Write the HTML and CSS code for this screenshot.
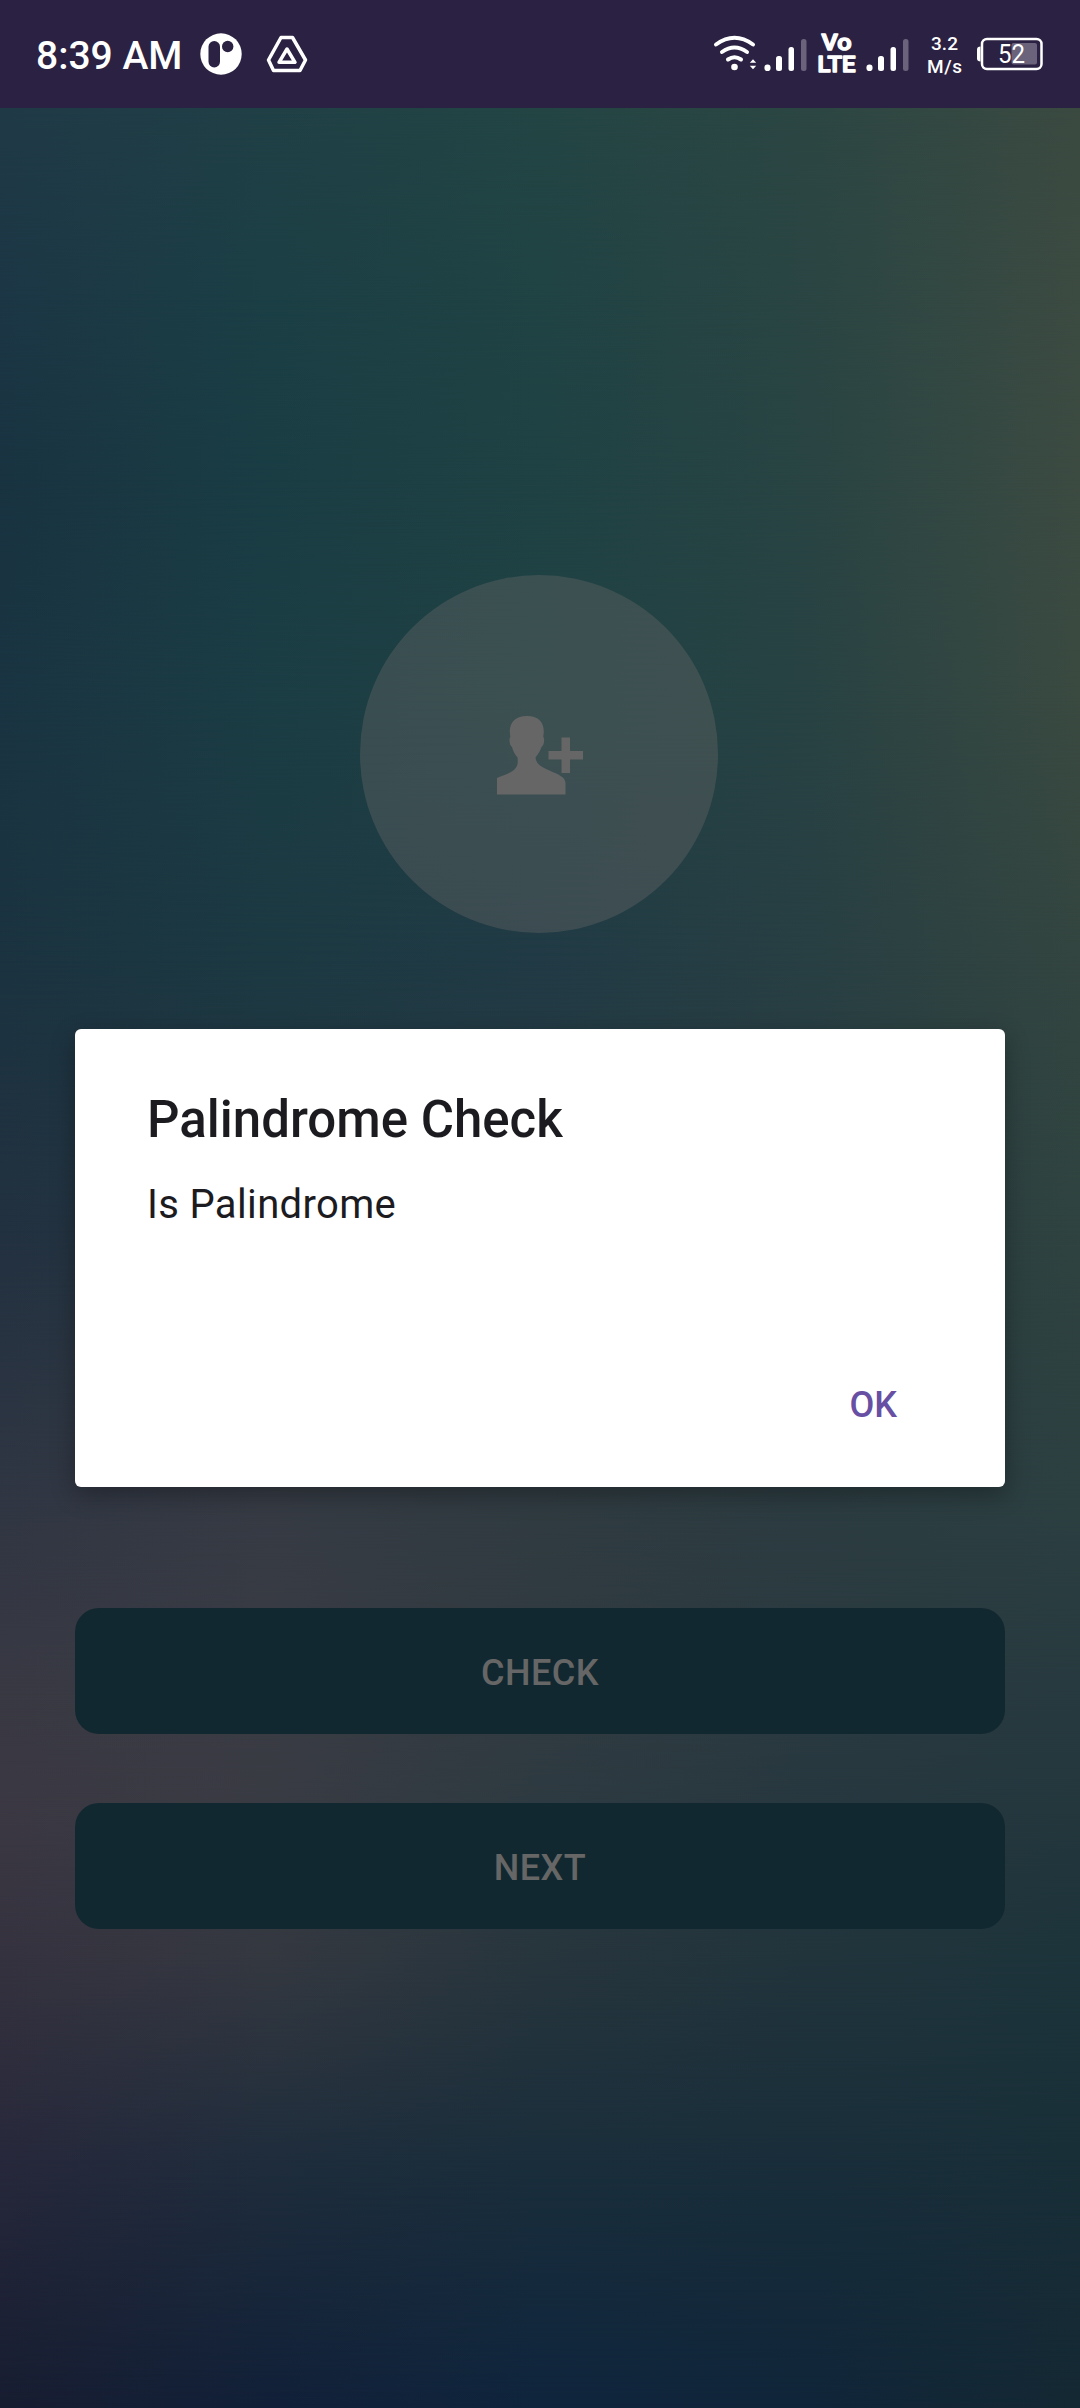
FILE: index.html
```html
<!DOCTYPE html>
<html lang="en">
<head>
<meta charset="utf-8">
<title>Palindrome Check</title>
<link rel="stylesheet" href="styles.css">
</head>
<body>
<div class="screen">
  <div class="backdrop" aria-hidden="true">
    <i class="band b0"></i><i class="band b1"></i><i class="band b2"></i><i class="band b3"></i>
    <i class="band b4"></i><i class="band b5"></i><i class="band b6"></i><i class="band b7"></i>
    <i class="band b8"></i><i class="band b9"></i><i class="band b10"></i><i class="band b11"></i>
  </div>
  <div class="content">
    <header class="status">
      <span class="clock">8:39 AM</span>
      <svg class="notifications" width="110" height="44" viewBox="198 32 110 44">
        <circle cx="221" cy="54" r="20.7" fill="#fff"/>
        <rect x="208.5" y="41" width="11.5" height="26.500" rx="5.700" fill="#2b2142"/>
        <circle cx="227.700" cy="46.500" r="5.700" fill="#2b2142"/>
        <g fill="none" stroke="#fff" stroke-width="3.500" stroke-linejoin="round">
          <path d="M281 37.500h11.500L305.500 60l-5.500 10.500H273.500L268.500 60z"/>
          <path d="M287 49l8 13.300h-16z"/>
        </g>
      </svg>
      <svg class="system" width="340" height="60" viewBox="710 25 340 60">
        <g fill="none" stroke="#fff" stroke-width="4" stroke-linecap="round">
          <path d="M716 44.500q18.500-13.500 37 0"/>
          <path d="M722 52q12.500-9 25 0"/>
          <path d="M728 59.500q6.500-4.500 13 0"/>
        </g>
        <circle cx="734.500" cy="67" r="3.300" fill="#fff"/>
        <path d="M753 59.300l3.200 3.500h-6.400zM753 69.300l3.200-3.500h-6.400z" fill="#fff"/>
        <g fill="#fff">
          <rect x="764.500" y="64.500" width="6" height="6.500" rx="2.800"/>
          <rect x="776" y="56" width="6" height="15" rx="2.500"/>
          <rect x="788.500" y="47" width="5.500" height="24" rx="2.500"/>
          <rect x="866.500" y="64.500" width="6" height="6.500" rx="2.800"/>
          <rect x="878" y="56" width="6" height="15" rx="2.500"/>
          <rect x="890.500" y="47" width="5.500" height="24" rx="2.500"/>
        </g>
        <g fill="#6b637b">
          <rect x="801" y="39" width="5.500" height="32" rx="2.500"/>
          <rect x="903" y="39" width="5.500" height="32" rx="2.500"/>
          <rect x="1011.500" y="43" width="25.500" height="21.500" rx="2"/>
        </g>
        <g class="volte">
          <text x="821.500" y="50" textLength="30" lengthAdjust="spacingAndGlyphs">Vo</text>
          <text x="817.500" y="72" textLength="38" lengthAdjust="spacingAndGlyphs">LTE</text>
        </g>
        <g class="rate">
          <text x="944.500" y="50" text-anchor="middle" textLength="27">3.2</text>
          <text x="944.500" y="73" text-anchor="middle" textLength="35">M/s</text>
        </g>
        <rect x="982" y="39" width="59.500" height="30" rx="5" fill="none" stroke="#fff" stroke-width="2.500"/>
        <path d="M980.500 46.500q-3.500 0-3.500 3v9q0 3 3.500 3z" fill="#fff"/>
        <text class="charge" x="1011.500" y="63" text-anchor="middle" textLength="27" lengthAdjust="spacingAndGlyphs">52</text>
      </svg>
    </header>
    <div class="avatar">
      <svg width="88" height="80" viewBox="0 0 88 80">
        <path d="M30 0C19 0 12.500 6 12.800 16l.5 5C12 22 12.200 29 15 31c1 4 3 8 5.500 10.500 1 8-1 11-6.500 14.500-5 3-10 4-14 6v16.500h68.500V67c0-6-8-9-15-12-8-3.500-14-6-15-13.500C41.500 38 43.500 34 44.500 31c3-2 3.200-9 1.800-10l.5-5C47 6 41 0 30 0z"/>
        <path d="M64.500 21.500h8.500v13.500h13v8.500H73V57h-8.500V43.500H51.500V35h13z"/>
      </svg>
    </div>
    <section class="dialog" role="dialog">
      <h1>Palindrome Check</h1>
      <p>Is Palindrome</p>
      <button class="ok">OK</button>
    </section>
    <div class="actions">
      <button class="action">CHECK</button>
      <button class="action">NEXT</button>
    </div>
  </div>
</div>
</body>
</html>
```
FILE: styles.css
```css
* { box-sizing: border-box; }
body { margin: 0; font-family: Roboto, "Liberation Sans", sans-serif; }
button { border: 0; padding: 0; font: inherit; }

.screen { display: grid; width: 1080px; height: 2408px; overflow: hidden; }
.backdrop, .content { grid-area: 1 / 1; min-width: 0; }
.backdrop { display: grid; }

/* Each band fades in between --from and --to over the bands before it. */
.band {
  grid-area: 1 / 1;
  background: linear-gradient(90deg, var(--c1), var(--c2) 25%, var(--c3) 50%, var(--c4) 75%, var(--c5));
  -webkit-mask-image: linear-gradient(transparent var(--from), #000 var(--to));
  mask-image: linear-gradient(transparent var(--from), #000 var(--to));
}
.b0 { --from: -1px; --to: 0px; --c1: #203a47; --c2: #204046; --c3: #234544; --c4: #2c4643; --c5: #3b4a41; }
.b1 { --from: 108px; --to: 300px; --c1: #1c3645; --c2: #1b3f45; --c3: #204344; --c4: #2a4543; --c5: #3c4b42; }
.b2 { --from: 300px; --to: 480px; --c1: #193341; --c2: #1a3d44; --c3: #1f4244; --c4: #294443; --c5: #3c4b42; }
.b3 { --from: 480px; --to: 700px; --c1: #1a3442; --c2: #1b3d44; --c3: #204244; --c4: #284243; --c5: #3a4a41; }
.b4 { --from: 700px; --to: 960px; --c1: #1b3340; --c2: #1c3942; --c3: #213a45; --c4: #283f43; --c5: #334540; }
.b5 { --from: 960px; --to: 1230px; --c1: #223140; --c2: #263642; --c3: #283b42; --c4: #293d42; --c5: #2f4340; }
.b6 { --from: 1230px; --to: 1500px; --c1: #303643; --c2: #363b44; --c3: #303b41; --c4: #2c3c41; --c5: #2c3f41; }
.b7 { --from: 1500px; --to: 1700px; --c1: #393943; --c2: #3a3c44; --c3: #313b41; --c4: #2a3a40; --c5: #273a3f; }
.b8 { --from: 1700px; --to: 1820px; --c1: #3b3843; --c2: #393b43; --c3: #2d3a41; --c4: #27373f; --c5: #23373d; }
.b9 { --from: 1820px; --to: 1960px; --c1: #35323f; --c2: #343840; --c3: #27353d; --c4: #21343c; --c5: #1d343b; }
.b10 { --from: 1960px; --to: 2160px; --c1: #27283b; --c2: #1f2d3c; --c3: #1a2e3b; --c4: #192e3a; --c5: #192f38; }
.b11 { --from: 2160px; --to: 2408px; --c1: #171d31; --c2: #112038; --c3: #0f253d; --c4: #102539; --c5: #142833; }

.content {
  position: relative;
  z-index: 1;
  display: flex;
  flex-direction: column;
  align-items: center;
}

.status {
  display: flex;
  align-items: center;
  width: 100%;
  height: 108px;
  padding: 0 30px 0 36px;
  background: #2b2142;
  color: #fff;
}
.clock { width: 146px; margin-top: 3px; white-space: nowrap; font-size: 39px; font-weight: 500; line-height: 46px; }
.notifications { margin-left: 16px; }
.system { margin: 2px 0 0 auto; }
.volte { fill: #fff; stroke: #fff; stroke-width: 1.500; stroke-linejoin: round; font-size: 22px; font-weight: 500; line-height: 1; }
.rate { fill: #fff; font-size: 19px; font-weight: 500; }
.charge { fill: #fff; font-size: 26px; }

.avatar {
  display: flex;
  align-items: center;
  justify-content: center;
  width: 358px;
  height: 358px;
  margin: 467px 2px 0 0;
  border-radius: 50%;
  background: rgba(102, 102, 102, .4);
}
.avatar svg { margin: 3px 0 0 3px; fill: #666; }

.dialog {
  display: flex;
  flex-direction: column;
  width: 930px;
  height: 458px;
  margin-top: 96px;
  padding: 61px 100px 50px 72px;
  border-radius: 6px;
  background: #fff;
  color: #1c1b1f;
  box-shadow: 0 8px 24px rgba(0, 0, 0, .3);
}
h1 { margin: 0; font-size: 51px; font-weight: 500; line-height: 60px; }
p { margin: 32px 0 0; font-size: 40px; line-height: 46px; letter-spacing: .35px; }
.ok {
  align-self: flex-end;
  margin-top: auto;
  margin-right: 8px;
  background: none;
  color: #6750a4;
  font-size: 36px;
  font-weight: 500;
  line-height: 64px;
}

.actions { display: flex; flex-direction: column; gap: 69px; margin-top: 121px; }
.action {
  width: 930px;
  height: 126px;
  padding-top: 4px;
  border-radius: 24px;
  background: #122830;
  color: #666;
  font-size: 36px;
  font-weight: 500;
  letter-spacing: .5px;
}
```
